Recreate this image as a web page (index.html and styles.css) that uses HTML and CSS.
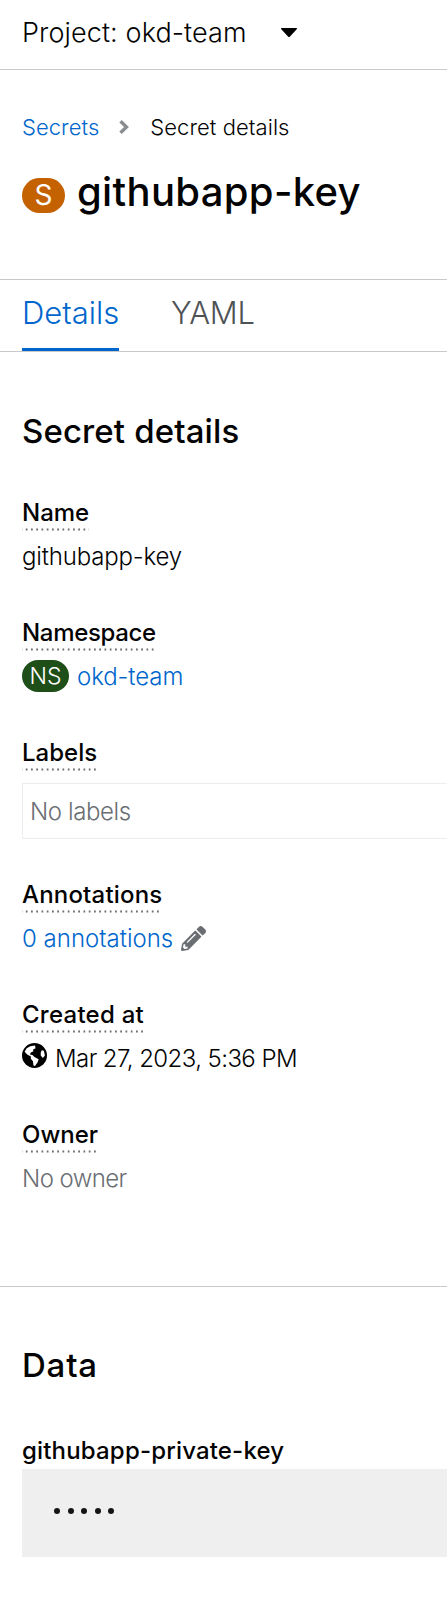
FILE: index.html
```html
<!DOCTYPE html>
<html lang="en">
<head>
<meta charset="utf-8">
<title>githubapp-key</title>
<link rel="stylesheet" href="styles.css">
</head>
<body>
<header class="project-bar"><span class="project-name">Project: okd-team</span>
<svg class="caret" viewBox="0 0 16 9"><path d="M0.6 0H15.4Q16.4 .5 15.7 1.2L9 8.4Q8 9.4 7 8.4L.3 1.2Q-.4 .5 .6 0Z"/></svg></header>
<section class="heading">
<nav class="breadcrumb"><a class="crumb-link">Secrets</a>
<svg class="chevron" viewBox="0 0 10 14"><path d="M1.5 1.2L7.500 7L1.500 12.800"/></svg>
<span class="crumb-current">Secret details</span></nav>
<h1 class="title"><span class="badge badge-secret">S</span><span class="title-text">githubapp-key</span></h1>
</section>
<nav class="tabs"><a class="tab active"><span class="tab-details">Details</span></a><a class="tab"><span class="tab-yaml">YAML</span></a></nav>
<section class="details">
<h2 class="section-title t-details">Secret details</h2>
<dl class="fields">
<div class="field"><dt class="label l-name">Name</dt><dd class="value"><span class="v-name">githubapp-key</span></dd></div>
<div class="field"><dt class="label l-namespace">Namespace</dt><dd class="value"><span class="badge badge-ns">NS</span><a class="link v-ns">okd-team</a></dd></div>
<div class="field field-labels"><dt class="label l-labels">Labels</dt><dd class="label-box"><span class="v-labels">No labels</span></dd></div>
<div class="field"><dt class="label l-annotations">Annotations</dt><dd class="value"><a class="link v-annotations">0 annotations</a>
<svg class="pencil" viewBox="0 0 512 512"><path d="M497.900 142.100l-46.100 46.100c-4.700 4.700-12.300 4.700-17 0l-111-111c-4.700-4.700-4.700-12.300 0-17l46.100-46.100c18.700-18.700 49.100-18.700 67.900 0l60.100 60.100c18.800 18.700 18.800 49.100 0 67.900zM284.200 99.800L21.600 362.400.4 483.900c-2.900 16.400 11.400 30.600 27.800 27.800l121.500-21.300 262.600-262.600c4.700-4.700 4.700-12.300 0-17l-111-111c-4.800-4.700-12.400-4.700-17.100 0zM124.100 339.900c-5.500-5.500-5.500-14.300 0-19.800l154-154c5.500-5.500 14.300-5.500 19.800 0s5.500 14.300 0 19.800l-154 154c-5.500 5.500-14.300 5.500-19.800 0zM88 424h48v36.300l-64.500 11.300-31.100-31.100L51.700 376H88v48z"/></svg></dd></div>
<div class="field"><dt class="label l-created">Created at</dt><dd class="value">
<svg class="globe" viewBox="0 0 24 24"><circle cx="12" cy="12" r="12"/><path class="land" d="M8 3L12.500 2.500L13 5L10.500 6.500L11 8L8.500 9L7.500 11L10 11.500L12 13.500L16 15.500L15 18.500L12.500 22L11 21.500L10.500 17.500L8.500 15L8.500 13L5 11L2.500 8.500L4.500 5ZM19 7L21 7.500L22 12L20 14.500L18 12L18 9Z"/></svg>
<span class="v-created">Mar 27, 2023, 5:36 PM</span></dd></div>
<div class="field"><dt class="label l-owner">Owner</dt><dd class="value muted"><span class="v-owner">No owner</span></dd></div>
</dl>
</section>
<section class="data">
<h2 class="section-title t-data">Data</h2>
<h3 class="data-key"><span class="k-private">githubapp-private-key</span></h3>
<div class="secret-box"><i class="dot"></i><i class="dot"></i><i class="dot"></i><i class="dot"></i><i class="dot"></i></div>
</section>
</body>
</html>
```
FILE: styles.css
```css
* { box-sizing: border-box; margin: 0; padding: 0; }
body { width: 447px; height: 1611px; overflow: hidden; background: #fff; color: #030303; font-family: Inter, "Liberation Sans", sans-serif; font-weight: 300; font-size: 24px; white-space: nowrap; }
.project-bar { display: flex; align-items: center; height: 70px; padding: 0 0 5px 22px; border-bottom: 1px solid #c9c9c9; font-size: 27px; }
.project-name { letter-spacing: .11px; }
.caret { width: 16px; height: 9px; margin: 0 0 0 34px; fill: #000; }
.heading { height: 209px; padding: 41px 0 0 22px; }
.breadcrumb { display: flex; align-items: center; height: 32px; font-size: 22px; }
.chevron { width: 10px; height: 14px; margin: 0 21px 0 20px; fill: none; stroke: #8a8d90; stroke-width: 3.4; }
.crumb-link, .link { color: #06c; }
.crumb-link { letter-spacing: .05px; }
.crumb-current { letter-spacing: .06px; }
.title { display: flex; align-items: center; height: 50px; margin-top: 26px; font-size: 40px; font-weight: 500; }
.title-text { padding-bottom: 6px; letter-spacing: .33px; }
.badge { display: flex; align-items: center; justify-content: center; color: #fff; border-radius: 18px; }
.badge-secret { width: 43px; height: 35px; margin: 2px 12px 0 0; background: #c46100; font-size: 28px; font-weight: 400; }
.tabs { display: flex; height: 73px; padding-left: 22px; border: solid #c9c9c9; border-width: 1px 0; gap: 52px; }
.tab { height: 71px; padding-top: 14px; font-size: 31px; line-height: 38px; color: #4f5255; border-bottom: 3px solid transparent; }
.tab.active { width: 97px; color: #06c; border-color: #06c; }
.tab-yaml { letter-spacing: -.2px; }
.details { height: 934px; padding: 59px 0 0 22px; }
.section-title { height: 44px; font-size: 33px; line-height: 40px; font-weight: 500; }
.t-details { letter-spacing: .12px; }
.t-data { letter-spacing: .8px; }
.fields { padding-top: 42px; }
.field { display: flex; flex-direction: column; height: 120px; }
.field-labels { height: 142px; }
.label { align-self: flex-start; height: 34px; padding-top: 1px; line-height: 30px; font-weight: 500; background: radial-gradient(circle, #6a6e73 .9px, transparent 1.3px) 2px 100% / 5.25px 3px repeat-x; }
.value { display: flex; align-items: center; height: 36px; margin-top: 7px; }
.l-namespace { letter-spacing: -.32px; }
.l-annotations { letter-spacing: .18px; }
.l-created { letter-spacing: .25px; }
.v-name { letter-spacing: -.17px; }
.v-ns { letter-spacing: -.08px; }
.v-labels { letter-spacing: -.4px; }
.v-created { letter-spacing: -.58px; }
.v-owner { letter-spacing: -.58px; }
.k-private { letter-spacing: .17px; }
.badge-ns { width: 47px; height: 32px; margin: 0 8px 0 0; background: #1e4f18; font-size: 23px; font-weight: 300; }
.label-box { display: flex; align-items: center; height: 56px; margin-top: 12px; padding-left: 7px; border: 1px solid #ededed; border-right: 0; color: #6a6e73; }
.muted { color: #6a6e73; }
.pencil { width: 25px; height: 25px; margin: 0 0 0 8px; fill: #6a6e73; }
.globe { width: 25px; height: 25px; margin: -6px 8px 0 0; }
.land { fill: #fff; }
.data { padding: 58px 0 0 22px; border-top: 1px solid #c9c9c9; }
.data-key { height: 34px; margin-top: 46px; padding-top: 1px; font-size: 24px; font-weight: 500; line-height: 30px; }
.secret-box { display: flex; gap: 7.6px; height: 88px; padding: 39px 0 0 32px; background: #efefef; }
.dot { width: 6px; height: 6px; border-radius: 50%; background: #151515; }
```
